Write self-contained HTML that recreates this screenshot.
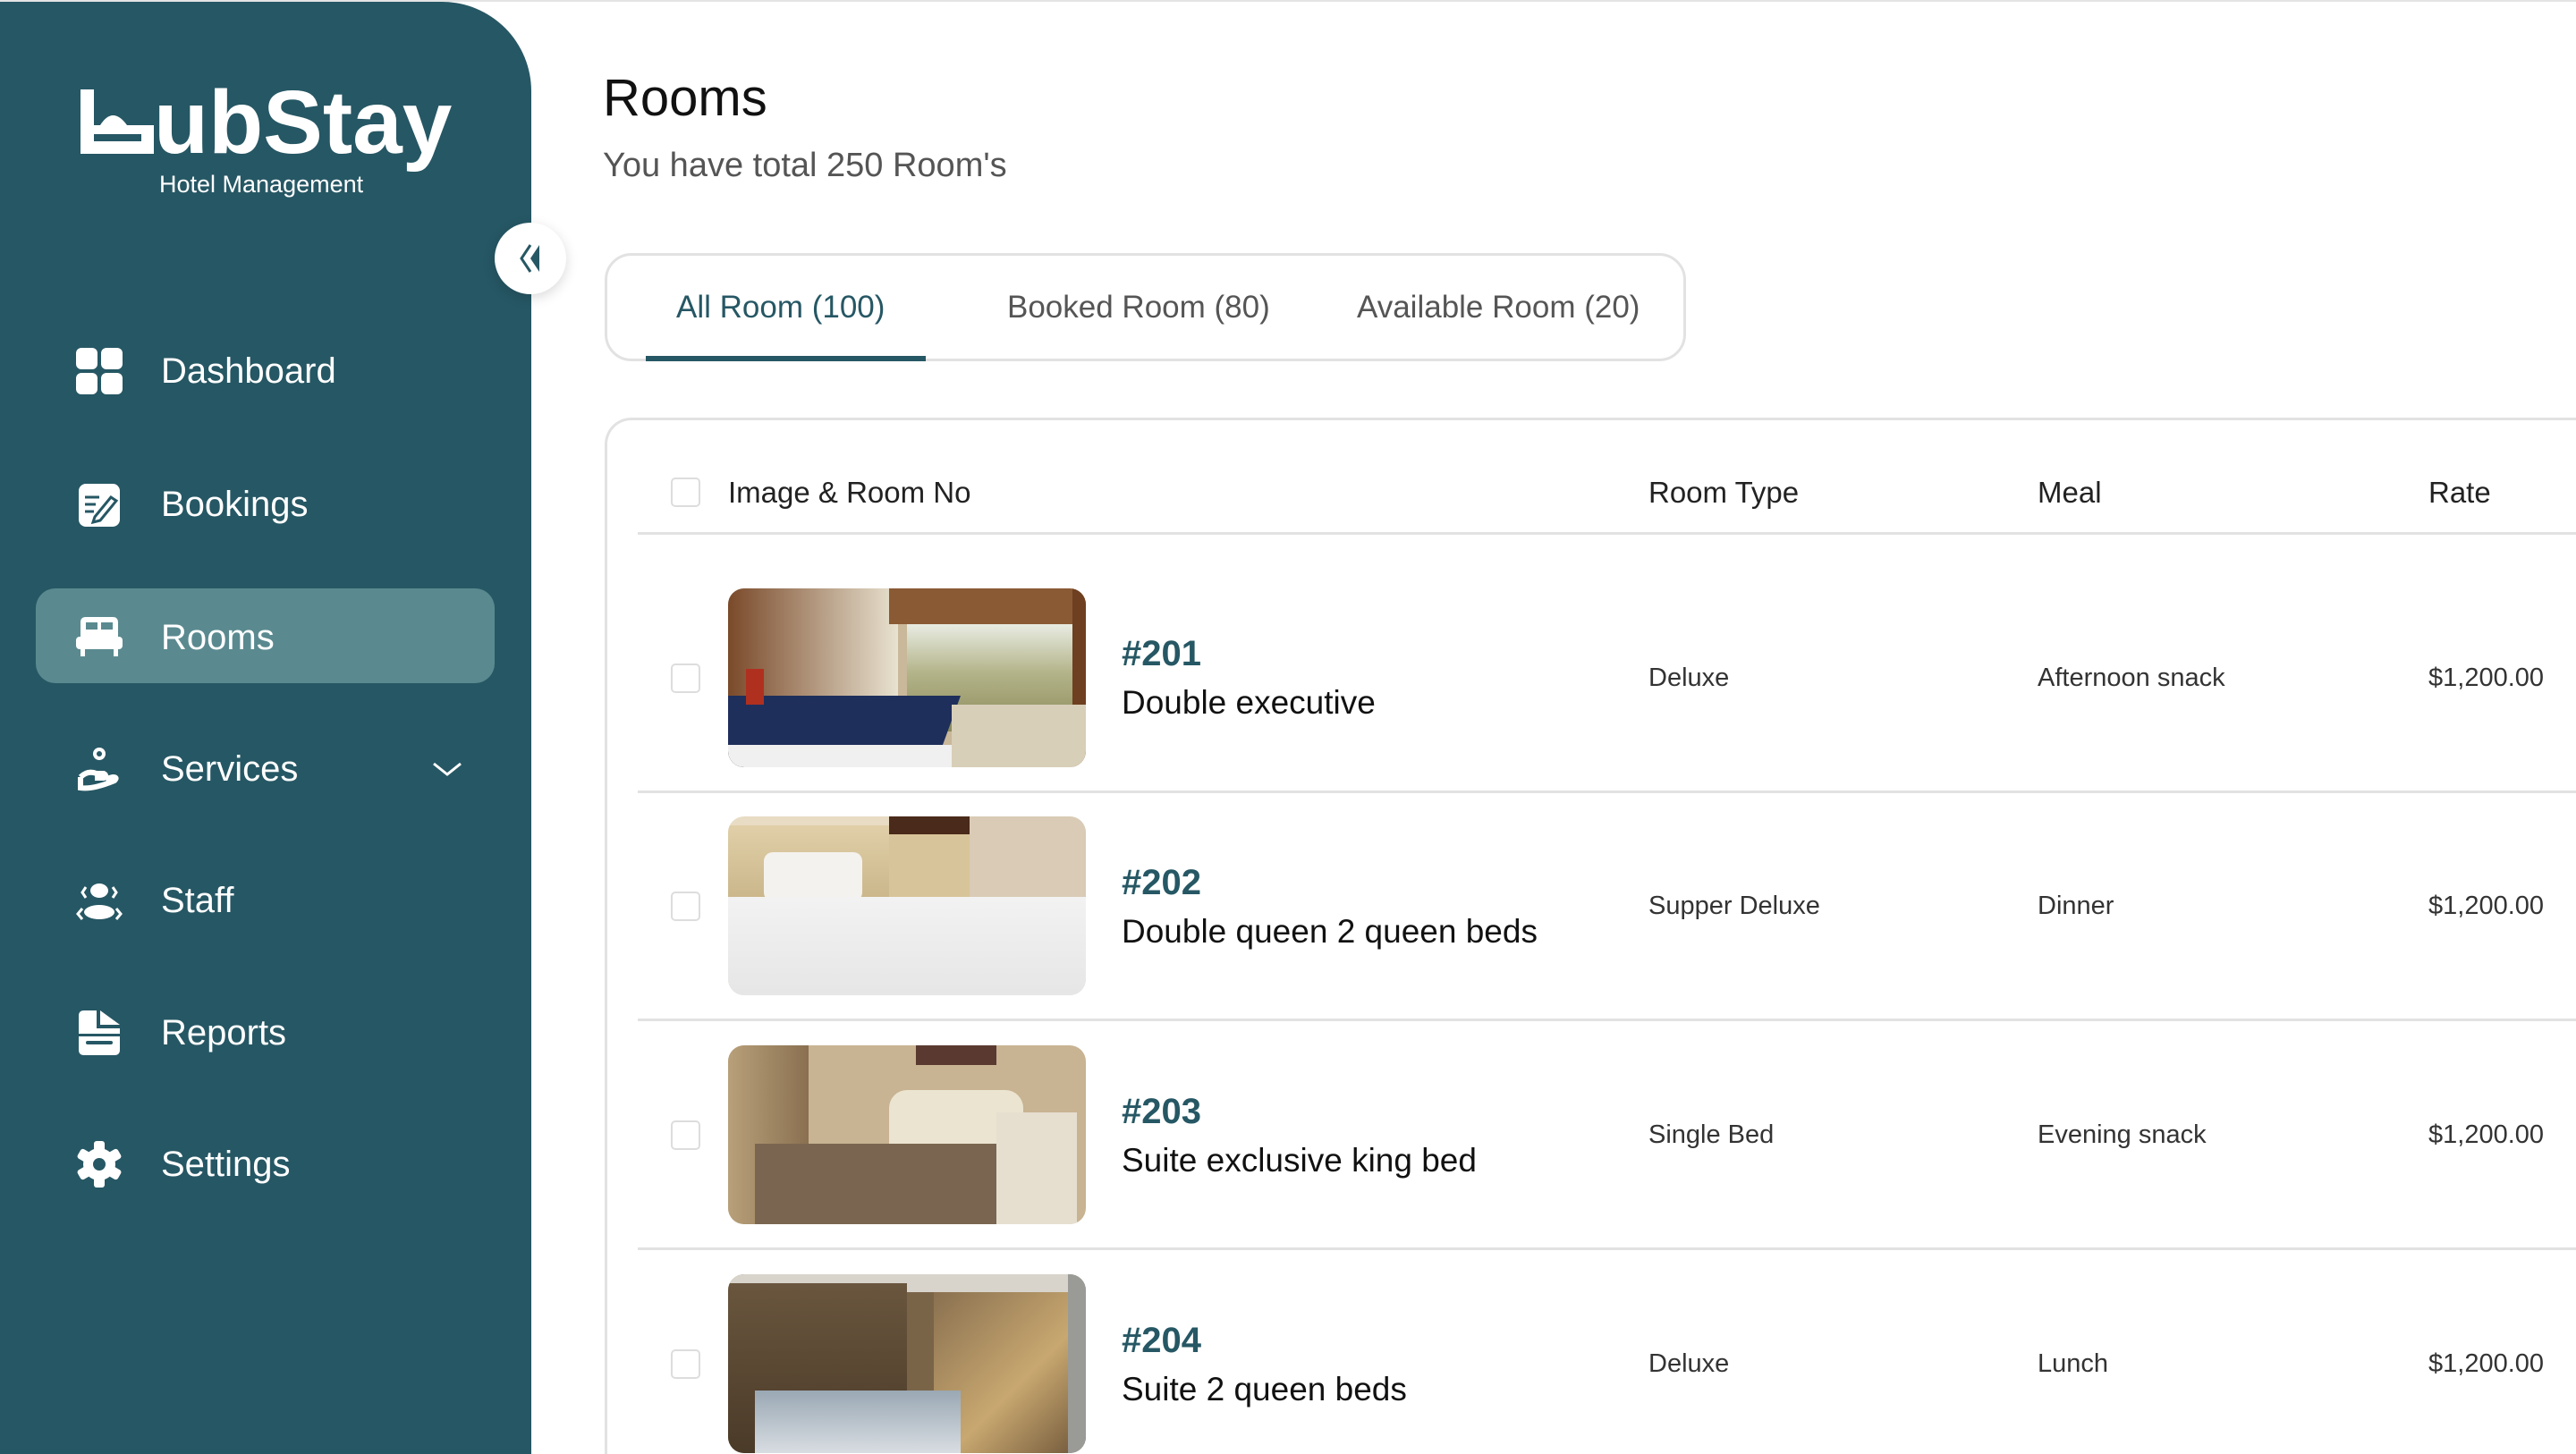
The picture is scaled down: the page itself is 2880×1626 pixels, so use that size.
<!DOCTYPE html>
<html><head><meta charset="utf-8"><style>
*{margin:0;padding:0;box-sizing:border-box}
html,body{width:2880px;height:1626px;overflow:hidden;background:#fff}
body{font-family:"Liberation Sans",sans-serif}
#root{position:relative;width:2880px;height:1626px;overflow:hidden}
.a{position:absolute}
.sb{left:0;top:2px;width:594px;height:1624px;background:#265764;border-top-right-radius:100px}
.topline{left:0;top:0;width:2880px;height:2px;background:#e4e4e4}
.nav{position:absolute;left:180px;color:#fff;font-size:40px;line-height:40px}
.ic{position:absolute;left:84px;width:54px;height:54px}
.col{position:absolute;font-size:29px;color:#333;line-height:30px}
.hd{position:absolute;font-size:33px;color:#222;line-height:34px;top:534px}
.cb{position:absolute;left:750px;width:33px;height:33px;border:2px solid #ddd;border-radius:5px;background:#fff}
.rn{position:absolute;left:1254px;font-size:40px;font-weight:bold;color:#265764;line-height:40px}
.nm{position:absolute;left:1254px;font-size:37px;color:#111;line-height:40px}
.line{position:absolute;left:713px;width:2167px;height:3px;background:#e2e2e2}
.img{position:absolute;left:814px;width:400px;height:200px;border-radius:18px;overflow:hidden}
.img div{position:absolute}
</style></head><body><div id="root">
<div class="a topline"></div>
<div class="a sb"></div>
<!-- logo -->
<svg class="a" style="left:90px;top:100px" width="82" height="72" viewBox="0 0 82 72"><rect x="0" y="0" width="15" height="72" fill="#fff"/><rect x="0" y="40" width="82" height="10" fill="#fff"/><rect x="0" y="58" width="82" height="14" fill="#fff"/><rect x="68" y="40" width="14" height="32" fill="#fff"/><path d="M22 40 Q36 18 52 40Z" fill="#fff"/></svg>
<div class="a" style="left:172px;top:82px;color:#fff;font-size:100px;font-weight:bold;line-height:110px">ubStay</div>
<div class="a" style="left:178px;top:191px;color:#fff;font-size:27px;line-height:30px">Hotel Management</div>
<!-- collapse -->
<div class="a" style="left:553px;top:249px;width:80px;height:80px;border-radius:50%;background:#fff;box-shadow:0 4px 14px rgba(0,0,0,.15)"></div>
<svg class="a" style="left:573px;top:269px" width="40" height="40" viewBox="0 0 40 40"><path d="M20 5 L10 20 L20 35" stroke="#265764" stroke-width="3" fill="none"/><path d="M30 5 L20 20 L30 35 Z" fill="#265764"/></svg>
<!-- active -->
<div class="a" style="left:40px;top:658px;width:513px;height:106px;border-radius:22px;background:#5a8a8f"></div>
<!-- icons -->
<svg class="ic" style="top:388px" viewBox="0 0 54 54" fill="#fff"><rect x="1" y="1" width="24" height="24" rx="6"/><rect x="29" y="1" width="24" height="24" rx="6"/><rect x="1" y="29" width="24" height="24" rx="6"/><rect x="29" y="29" width="24" height="24" rx="6"/></svg>
<svg class="ic" style="top:538px" viewBox="0 0 54 54"><rect x="4" y="3" width="46" height="48" rx="8" fill="#fff"/><path d="M11 18h16M11 26h12M11 34h10" stroke="#265764" stroke-width="3"/><path d="M22 40 L40 18 L46 22 L28 44 L20 46Z" fill="#fff" stroke="#265764" stroke-width="3"/></svg>
<svg class="ic" style="top:686px" viewBox="0 0 54 54" fill="#fff"><path d="M6 10 Q6 4 12 4 H42 Q48 4 48 10 V26 H6Z"/><rect x="12" y="10" width="13" height="8" fill="#5a8a8f"/><rect x="29" y="10" width="13" height="8" fill="#5a8a8f"/><rect x="1" y="26" width="52" height="14" rx="4"/><rect x="6" y="38" width="5" height="10"/><rect x="43" y="38" width="5" height="10"/></svg>
<svg class="ic" style="top:833px" viewBox="0 0 54 54" fill="#fff"><circle cx="27" cy="10" r="7"/><circle cx="27" cy="10" r="3" fill="#265764"/><path d="M6 36 Q14 28 24 32 H32 Q36 34 32 37 H22 M6 36 V48 Q20 50 44 40 Q48 36 42 36 L34 38" stroke="#fff" stroke-width="6" fill="none"/></svg>
<svg class="ic" style="top:980px" viewBox="0 0 54 54" fill="#fff"><ellipse cx="27" cy="16" rx="10" ry="8"/><ellipse cx="27" cy="40" rx="17" ry="8"/><path d="M12 12 L8 18 L12 24 M42 12 L46 18 L42 24 M8 36 L3 42 L8 48 M46 36 L51 42 L46 48" stroke="#fff" stroke-width="3" fill="none"/></svg>
<svg class="ic" style="top:1128px" viewBox="0 0 54 54" fill="#fff"><path d="M4 8 Q4 2 10 2 H24 V22 H50 V46 Q50 52 44 52 H10 Q4 52 4 46Z"/><path d="M28 2 L50 18 H28Z"/><rect x="12" y="36" width="30" height="4" rx="2" fill="#265764"/><rect x="4" y="28" width="46" height="3" fill="#265764"/></svg>
<svg class="ic" style="top:1275px" viewBox="0 0 54 54"><g fill="#fff" transform="translate(27 27)"><circle r="18"/><rect x="-6" y="-26" width="12" height="52" rx="3"/><rect x="-6" y="-26" width="12" height="52" rx="3" transform="rotate(60)"/><rect x="-6" y="-26" width="12" height="52" rx="3" transform="rotate(120)"/></g><circle cx="27" cy="27" r="7" fill="#265764"/></svg>
<div class="nav" style="top:395px">Dashboard</div>
<div class="nav" style="top:544px">Bookings</div>
<div class="nav" style="top:693px">Rooms</div>
<div class="nav" style="top:840px">Services</div>
<div class="nav" style="top:987px">Staff</div>
<div class="nav" style="top:1135px">Reports</div>
<div class="nav" style="top:1282px">Settings</div>
<svg class="a" style="left:482px;top:848px" width="36" height="24" viewBox="0 0 36 24"><path d="M3 6 L18 18 L33 6" stroke="#fff" stroke-width="3" fill="none"/></svg>
<!-- header -->
<div class="a" style="left:674px;top:78px;font-size:58px;color:#111;line-height:64px">Rooms</div>
<div class="a" style="left:674px;top:164px;font-size:38px;color:#555;line-height:42px">You have total 250 Room's</div>
<!-- tabs -->
<div class="a" style="left:676px;top:283px;width:1209px;height:121px;border:3px solid #e2e2e2;border-radius:30px"></div>
<div class="a" style="left:756px;top:325px;font-size:35px;color:#265764;line-height:38px">All Room (100)</div>
<div class="a" style="left:1126px;top:325px;font-size:35px;color:#555;line-height:38px">Booked Room (80)</div>
<div class="a" style="left:1517px;top:325px;font-size:35px;color:#555;line-height:38px">Available Room (20)</div>
<div class="a" style="left:722px;top:398px;width:313px;height:6px;background:#265764"></div>
<!-- table card -->
<div class="a" style="left:676px;top:467px;width:2204px;height:1159px;border:3px solid #e2e2e2;border-right:none;border-bottom:none;border-top-left-radius:30px"></div>
<div class="cb" style="top:534px"></div>
<div class="hd" style="left:814px">Image &amp; Room No</div>
<div class="hd" style="left:1843px">Room Type</div>
<div class="hd" style="left:2278px">Meal</div>
<div class="hd" style="left:2715px">Rate</div>
<div class="line" style="top:595px"></div>
<div class="line" style="top:884px"></div>
<div class="line" style="top:1139px"></div>
<div class="line" style="top:1395px"></div>
<!-- row1 -->
<div class="cb" style="top:742px"></div>
<div class="img" style="top:658px;background:#c9b89a">
 <div style="left:0;top:0;width:190px;height:200px;background:linear-gradient(90deg,#7a4a2a,#e8e2d0)"></div>
 <div style="left:180px;top:0;width:220px;height:40px;background:#8a5a34"></div>
 <div style="left:200px;top:40px;width:190px;height:120px;background:linear-gradient(180deg,#e8ece2 0%,#b4b48a 45%,#8a8a5a 100%)"></div>
 <div style="left:385px;top:0;width:15px;height:200px;background:#6e3f20"></div>
 <div style="left:0;top:120px;width:260px;height:80px;background:#1e2f5c;transform:skewX(-20deg);transform-origin:0 0"></div>
 <div style="left:0;top:175px;width:260px;height:25px;background:#f0f0f0"></div>
 <div style="left:250px;top:130px;width:150px;height:70px;background:#d8cfb8"></div>
 <div style="left:20px;top:90px;width:20px;height:40px;background:#b03020"></div>
</div>
<div class="rn" style="top:711px">#201</div>
<div class="nm" style="top:766px">Double executive</div>
<div class="col" style="left:1843px;top:743px">Deluxe</div>
<div class="col" style="left:2278px;top:743px">Afternoon snack</div>
<div class="col" style="left:2715px;top:743px">$1,200.00</div>
<!-- row2 -->
<div class="cb" style="top:997px"></div>
<div class="img" style="top:913px;background:#e8dcc4">
 <div style="left:0;top:10px;width:270px;height:90px;background:linear-gradient(180deg,#e0cfa8,#c9b488)"></div>
 <div style="left:180px;top:0;width:120px;height:90px;background:#4a2a1a"></div>
 <div style="left:180px;top:20px;width:90px;height:80px;background:#d8c49a"></div>
 <div style="left:270px;top:0;width:130px;height:90px;background:#d9cbb6"></div>
 <div style="left:40px;top:40px;width:110px;height:55px;background:#f4f2ee;border-radius:10px"></div>
 <div style="left:0;top:90px;width:400px;height:110px;background:linear-gradient(180deg,#f2f2f2,#e6e6e6)"></div>
</div>
<div class="rn" style="top:967px">#202</div>
<div class="nm" style="top:1022px">Double queen 2 queen beds</div>
<div class="col" style="left:1843px;top:998px">Supper Deluxe</div>
<div class="col" style="left:2278px;top:998px">Dinner</div>
<div class="col" style="left:2715px;top:998px">$1,200.00</div>
<!-- row3 -->
<div class="cb" style="top:1253px"></div>
<div class="img" style="top:1169px;background:#c8b392">
 <div style="left:0;top:0;width:90px;height:200px;background:linear-gradient(90deg,#b8a07a,#8a7050)"></div>
 <div style="left:180px;top:50px;width:150px;height:60px;background:#ebe4d0;border-radius:20px 20px 0 0"></div>
 <div style="left:30px;top:110px;width:300px;height:90px;background:#7a6650"></div>
 <div style="left:300px;top:75px;width:90px;height:125px;background:#e6dfd0"></div>
 <div style="left:210px;top:0;width:90px;height:22px;background:#5a3a30"></div>
</div>
<div class="rn" style="top:1223px">#203</div>
<div class="nm" style="top:1278px">Suite exclusive king bed</div>
<div class="col" style="left:1843px;top:1254px">Single Bed</div>
<div class="col" style="left:2278px;top:1254px">Evening snack</div>
<div class="col" style="left:2715px;top:1254px">$1,200.00</div>
<!-- row4 -->
<div class="cb" style="top:1509px"></div>
<div class="img" style="top:1425px;height:200px;background:#7a6448">
 <div style="left:0;top:0;width:400px;height:20px;background:#d8d4cc"></div>
 <div style="left:0;top:10px;width:200px;height:190px;background:linear-gradient(180deg,#6a563e,#4a3a28)"></div>
 <div style="left:230px;top:20px;width:150px;height:180px;background:linear-gradient(135deg,#8a7050,#c8a870 60%,#7a6040)"></div>
 <div style="left:380px;top:0;width:20px;height:200px;background:#9a9a96"></div>
 <div style="left:30px;top:130px;width:230px;height:70px;background:linear-gradient(180deg,#9aa8b4,#d8dde2)"></div>
</div>
<div class="rn" style="top:1479px">#204</div>
<div class="nm" style="top:1534px">Suite 2 queen beds</div>
<div class="col" style="left:1843px;top:1510px">Deluxe</div>
<div class="col" style="left:2278px;top:1510px">Lunch</div>
<div class="col" style="left:2715px;top:1510px">$1,200.00</div>
</div></body></html>
